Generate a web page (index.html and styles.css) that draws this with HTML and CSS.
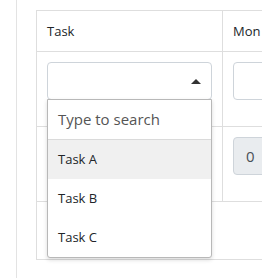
FILE: index.html
```html
<!doctype html>
<html>
<head>
  <title>Timesheet</title>
  <link rel="stylesheet" href="styles.css">
</head>
<body>
  <div class="panel">
    <table class="sheet">
      <colgroup>
        <col class="col-task">
        <col class="col-day">
      </colgroup>
      <thead>
        <tr>
          <th>Task</th>
          <th>Mon</th>
        </tr>
      </thead>
      <tbody>
        <tr>
          <td>
            <div class="field">
              <div class="picker open">
                <div class="picker-box"><span class="caret"></span></div>
                <div class="picker-menu">
                  <div class="picker-search">Type to search</div>
                  <ul class="picker-options">
                    <li class="active">Task A</li>
                    <li>Task B</li>
                    <li>Task C</li>
                  </ul>
                </div>
              </div>
            </div>
          </td>
          <td>
            <div class="field">
              <div class="picker">
                <div class="picker-box"></div>
              </div>
            </div>
          </td>
        </tr>
        <tr>
          <td><div class="field"></div></td>
          <td>
            <div class="field">
              <input class="hours" type="text" value="0" disabled>
            </div>
          </td>
        </tr>
        <tr class="foot">
          <td colspan="2"></td>
        </tr>
      </tbody>
    </table>
  </div>
</body>
</html>
```

FILE: styles.css
```css
html, body {
  margin: 0;
  height: 100%;
  overflow: hidden;
  background: #fff;
}

body {
  font-family: "Open Sans", "Noto Sans", Arial, sans-serif;
  font-size: 13px;
  line-height: 20px;
  color: #212529;
}

.panel {
  margin-left: 16px;
  height: 100%;
  border-left: 1px solid #e3e3e3;
  padding: 10px 0 0 19px;
}

.sheet {
  border-collapse: collapse;
  table-layout: fixed;
  width: 420px;
}
.col-task { width: 186px; }
.col-day { width: 234px; }

.sheet th,
.sheet td {
  border: 1px solid #dedede;
  padding: 10px;
  text-align: left;
  vertical-align: top;
  font-weight: normal;
}

.foot td { height: 37px; }

.field {
  margin-bottom: 16px;
  height: 38px;
}

.picker { position: relative; }

.picker-box {
  height: 36px;
  border: 1px solid #ced4da;
  border-radius: 4px;
  background: #fff;
  position: relative;
}

.caret {
  position: absolute;
  right: 10px;
  top: 16px;
  width: 0;
  height: 0;
  border-left: 5px solid transparent;
  border-right: 5px solid transparent;
  border-bottom: 5px solid #333;
}

.picker-menu {
  position: absolute;
  top: 37px;
  left: 0;
  right: 0;
  z-index: 2;
  background: #fff;
  border: 1px solid #b8b8b8;
  border-radius: 0 0 3px 3px;
  box-shadow: 0 2px 4px rgba(0, 0, 0, 0.15);
}

.picker-search {
  height: 39px;
  line-height: 39px;
  padding: 0 10px;
  font-size: 15px;
  color: #555;
  border-bottom: 1px solid #dadada;
}

.picker-options {
  list-style: none;
  margin: 0;
  padding: 0;
}
.picker-options li {
  height: 39px;
  line-height: 39px;
  padding: 0 10px;
}
.picker-options li.active { background: #f0f0f0; }

.hours {
  box-sizing: border-box;
  width: 100%;
  height: 38px;
  margin: 0;
  padding: 0 12px;
  border: 1px solid #ced4da;
  border-radius: 4px;
  background: #e9ecef;
  font-family: inherit;
  font-size: 15px;
  color: #495057;
}
```
